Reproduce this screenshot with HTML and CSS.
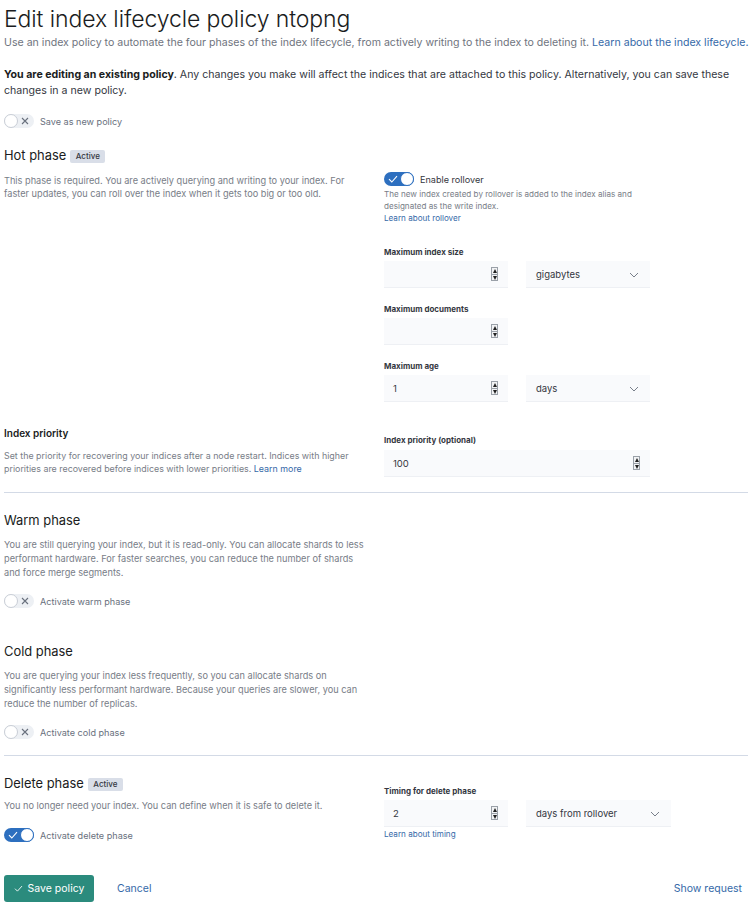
FILE: index.html
```html
<!DOCTYPE html>
<html lang="en">
<head>
<meta charset="utf-8">
<title>Edit index lifecycle policy</title>
<link rel="stylesheet" href="styles.css">
</head>
<body>
<div class="page">
  <h1 class="title">Edit index lifecycle policy ntopng</h1>
  <p class="subtitle">Use an index policy to automate the four phases of the index lifecycle, from actively writing to the index to deleting it. <a class="link" href="#">Learn about the index lifecycle.</a></p>
  <p class="notice"><strong>You are editing an existing policy</strong>. Any changes you make will affect the indices that are attached to this policy. Alternatively, you can save these changes in a new policy.</p>
  <div class="switch-row top-switch">
    <span class="switch off">
      <svg class="sw-icon sw-x" viewBox="0 0 8 8" width="8" height="8"><path d="M1 1 L7 7 M7 1 L1 7" stroke="#69707d" stroke-width="1.1" fill="none"/></svg>
      <span class="knob"></span>
    </span>
    <span class="switch-label">Save as new policy</span>
  </div>

  <section class="row hot-row">
    <div class="col-left">
      <h2 class="phase-title">Hot phase <span class="badge">Active</span></h2>
      <p class="desc hot-desc">This phase is required. You are actively querying and writing to your index. For faster updates, you can roll over the index when it gets too big or too old.</p>
    </div>
    <div class="col-right hot-right">
      <div class="switch-row">
        <span class="switch on">
          <svg class="sw-icon sw-check" viewBox="0 0 10 8" width="10" height="8"><path d="M1 4.2 L3.8 7 L9 1.2" stroke="#fff" stroke-width="1.1" fill="none"/></svg>
          <span class="knob"></span>
        </span>
        <span class="switch-label dark">Enable rollover</span>
      </div>
      <div class="help">The new index created by rollover is added to the index alias and designated as the write index.<br><a class="link" href="#">Learn about rollover</a></div>

      <label class="field-label first-label">Maximum index size</label>
      <div class="field-pair">
        <div class="input num"><span class="val"></span><span class="spin"><span class="up"></span><span class="dn"></span></span></div>
        <div class="input select"><span class="val">gigabytes</span><svg class="chev" viewBox="0 0 10 6" width="10" height="6"><path d="M1 1 L5 5 L9 1" stroke="#69707d" stroke-width="0.9" fill="none"/></svg></div>
      </div>

      <label class="field-label">Maximum documents</label>
      <div class="field-pair">
        <div class="input num"><span class="val"></span><span class="spin"><span class="up"></span><span class="dn"></span></span></div>
      </div>

      <label class="field-label">Maximum age</label>
      <div class="field-pair">
        <div class="input num"><span class="val">1</span><span class="spin"><span class="up"></span><span class="dn"></span></span></div>
        <div class="input select"><span class="val">days</span><svg class="chev" viewBox="0 0 10 6" width="10" height="6"><path d="M1 1 L5 5 L9 1" stroke="#69707d" stroke-width="0.9" fill="none"/></svg></div>
      </div>
    </div>
  </section>

  <section class="row prio-row">
    <div class="col-left">
      <h3 class="sub-title">Index priority</h3>
      <p class="desc prio-desc">Set the priority for recovering your indices after a node restart. Indices with higher priorities are recovered before indices with lower priorities. <a class="link" href="#">Learn more</a></p>
    </div>
    <div class="col-right prio-right">
      <label class="field-label">Index priority (optional)</label>
      <div class="input num wide"><span class="val">100</span><span class="spin"><span class="up"></span><span class="dn"></span></span></div>
    </div>
  </section>

  <hr class="divider first-divider">

  <section class="phase-block warm">
    <h2 class="phase-title">Warm phase</h2>
    <p class="desc narrow">You are still querying your index, but it is read-only. You can allocate shards to less performant hardware. For faster searches, you can reduce the number of shards and force merge segments.</p>
    <div class="switch-row phase-switch">
      <span class="switch off">
        <svg class="sw-icon sw-x" viewBox="0 0 8 8" width="8" height="8"><path d="M1 1 L7 7 M7 1 L1 7" stroke="#69707d" stroke-width="1.1" fill="none"/></svg>
        <span class="knob"></span>
      </span>
      <span class="switch-label">Activate warm phase</span>
    </div>
  </section>

  <section class="phase-block cold">
    <h2 class="phase-title">Cold phase</h2>
    <p class="desc narrow">You are querying your index less frequently, so you can allocate shards on significantly less performant hardware. Because your queries are slower, you can reduce the number of replicas.</p>
    <div class="switch-row phase-switch">
      <span class="switch off">
        <svg class="sw-icon sw-x" viewBox="0 0 8 8" width="8" height="8"><path d="M1 1 L7 7 M7 1 L1 7" stroke="#69707d" stroke-width="1.1" fill="none"/></svg>
        <span class="knob"></span>
      </span>
      <span class="switch-label">Activate cold phase</span>
    </div>
  </section>

  <hr class="divider second-divider">

  <section class="row delete-row">
    <div class="col-left">
      <h2 class="phase-title">Delete phase <span class="badge">Active</span></h2>
      <p class="desc delete-desc">You no longer need your index. You can define when it is safe to delete it.</p>
      <div class="switch-row delete-switch">
        <span class="switch on">
          <svg class="sw-icon sw-check" viewBox="0 0 10 8" width="10" height="8"><path d="M1 4.2 L3.8 7 L9 1.2" stroke="#fff" stroke-width="1.1" fill="none"/></svg>
          <span class="knob"></span>
        </span>
        <span class="switch-label">Activate delete phase</span>
      </div>
    </div>
    <div class="col-right delete-right">
      <label class="field-label">Timing for delete phase</label>
      <div class="field-pair">
        <div class="input num"><span class="val">2</span><span class="spin"><span class="up"></span><span class="dn"></span></span></div>
        <div class="input select long"><span class="val">days from rollover</span><svg class="chev" viewBox="0 0 10 6" width="10" height="6"><path d="M1 1 L5 5 L9 1" stroke="#69707d" stroke-width="0.9" fill="none"/></svg></div>
      </div>
      <div class="help"><a class="link" href="#">Learn about timing</a></div>
    </div>
  </section>

  <div class="actions">
    <button class="btn-save" type="button">
      <svg viewBox="0 0 10 8" width="9" height="7"><path d="M1 4.2 L3.8 7 L9 1.2" stroke="#fff" stroke-width="1" fill="none"/></svg>
      Save policy
    </button>
    <a class="link cancel" href="#">Cancel</a>
    <a class="link show-req" href="#">Show request</a>
  </div>
</div>
</body>
</html>
```

FILE: styles.css
```css
* { box-sizing: border-box; }
html, body { margin: 0; padding: 0; background: #fff; }
body {
  font-family: Inter, "Noto Sans", "DejaVu Sans", sans-serif;
  color: #343741;
}
.page { width: 753px; padding: 5px 5px 0 4px; }
.link { color: #3569a8; text-decoration: none; }

.title {
  margin: 0;
  font-size: 23px;
  line-height: 28px;
  font-weight: 300;
  color: #1a1c21;
  letter-spacing: -0.1px;
}
.subtitle {
  margin: 2px 0 0;
  font-size: 10.6px;
  line-height: 16px;
  color: #6f747e;
  white-space: nowrap;
}
.notice {
  margin: 16px 0 0;
  font-size: 10.6px;
  line-height: 16px;
  color: #343741;
  width: 735px;
}
.notice strong { font-weight: 700; color: #1a1c21; }

.switch-row { display: flex; align-items: center; height: 16px; gap: 6px; }
.top-switch { margin-top: 14px; }
.switch {
  position: relative;
  width: 30px; height: 14px;
  border-radius: 7px;
  flex: none;
}
.switch.off { background: #edf0f4; }
.switch.on { background: #2d6fbf; }
.knob {
  position: absolute; top: 0;
  width: 14px; height: 14px; border-radius: 50%;
  background: #fff;
  border: 1px solid #c9ced6;
}
.switch.off .knob { left: 0; }
.switch.on .knob { right: 0; border-color: #2d6fbf; }
.sw-icon { position: absolute; top: 3px; }
.sw-x { left: 17px; }
.sw-check { left: 4px; top: 3px; }
.switch-label { font-size: 9.1px; color: #69707d; }
.switch-label.dark { color: #343741; }

.row { display: grid; grid-template-columns: 1fr 1fr; column-gap: 16px; }
.hot-row { margin-top: 17px; }
.phase-title {
  margin: 0;
  font-size: 12.9px;
  line-height: 20px;
  font-weight: 400;
  color: #1a1c21;
  display: flex; align-items: center; gap: 4px;
}
.badge {
  display: inline-block;
  font-size: 8px;
  line-height: 13px;
  height: 13px;
  padding: 0 5.5px;
  background: #d9dee8;
  color: #343741;
  border-radius: 2px;
  font-weight: 500;
}
.desc {
  margin: 7px 0 0;
  font-size: 9.2px;
  line-height: 14px;
  color: #787d87;
}
.hot-desc { line-height: 13px; margin-top: 8px; }
.desc.narrow { width: 362px; }

.hot-right { padding-top: 25px; }
.help {
  margin-top: 1px;
  font-size: 8.1px;
  line-height: 12px;
  color: #787d87;
  max-width: 266px;
}
.field-label {
  display: block;
  margin-top: 15px;
  font-size: 8px;
  line-height: 12px;
  font-weight: 700;
  color: #343741;
}
.field-label.first-label { margin-top: 22px; }
.field-pair { display: flex; gap: 18px; margin-top: 3px; }
.input {
  position: relative;
  height: 27px;
  width: 124px;
  background: #f9fafc;
  border-bottom: 1px solid #eef0f4;
  display: flex; align-items: center;
  padding-left: 9px;
  font-size: 9.5px;
  color: #343741;
}
.input.select { padding-left: 10px; }
.input.select.long { width: 145px; }
.input.wide { width: 266px; margin-top: 4px; }
.spin {
  position: absolute;
  right: 10px; top: 6px;
  width: 7px; height: 14px;
  border: 1px solid #9aa0a8;
  background: #f2f3f5;
  display: flex; flex-direction: column;
}
.spin .up, .spin .dn { flex: 1; position: relative; }
.spin .up { border-bottom: 1px solid #9aa0a8; }
.spin .up::after, .spin .dn::after {
  content: ""; position: absolute; left: 0.5px;
  border-left: 2.5px solid transparent; border-right: 2.5px solid transparent;
}
.spin .up::after { top: 1px; border-bottom: 4px solid #222; }
.spin .dn::after { top: 1px; border-top: 4px solid #222; }
.chev { position: absolute; right: 11px; top: 11px; }

.prio-row { margin-top: 23px; }
.sub-title {
  margin: 0;
  font-size: 10px;
  line-height: 16px;
  font-weight: 600;
  color: #1a1c21;
}
.prio-desc { margin-top: 8px; line-height: 13px; font-size: 8.9px; }
.prio-right { padding-top: 9px; }
.prio-right .field-label { margin-top: 0; }

.divider { border: 0; border-top: 1px solid #d3dae6; margin: 0; }
.first-divider { margin-top: 15px; }
.warm { margin-top: 18px; }
.cold { margin-top: 33px; }
.phase-switch { margin-top: 13px; }
.second-divider { margin-top: 15px; }

.delete-row { margin-top: 18px; }
.delete-desc { margin-top: 5px; }
.delete-switch { margin-top: 14px; }
.delete-right { padding-top: 11px; }
.delete-right .field-label { margin-top: 0; }

.actions {
  margin-top: 32px;
  display: flex; align-items: center;
}
.btn-save {
  width: 90px; height: 27px;
  background: #2b8b7d;
  border: 0;
  border-radius: 3px;
  color: #fff;
  font-family: inherit;
  font-size: 10.5px;
  display: flex; align-items: center; justify-content: center; gap: 5px;
  padding: 0;
}
.cancel { margin-left: 23px; font-size: 10.5px; }
.show-req { margin-left: auto; margin-right: 6px; font-size: 10.5px; }
```
